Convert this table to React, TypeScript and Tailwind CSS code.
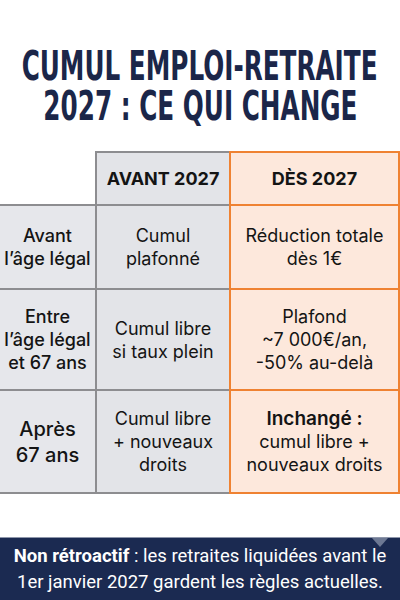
import React from "react";

const body = { fontFamily: "Inter, Roboto, 'Liberation Sans', sans-serif" };

function Cell({ className, children }: { className: string; children?: React.ReactNode }) {
  return (
    <div className={`flex items-center justify-center text-center text-[18px] leading-[23px] text-[#141414] ${className}`}>
      {children}
    </div>
  );
}

export default function App() {
  const g = "border-[#8d8d90]";
  const o = "border-[#ef8232]";
  return (
    <div className="w-[400px] h-[600px] bg-white flex flex-col overflow-hidden" style={body}>
      <div
        className="pt-[46px] flex flex-col items-center text-[#1b2649] font-bold text-[41px] leading-[40px] whitespace-nowrap"
        style={{ fontFamily: "'Liberation Sans Narrow', 'DejaVu Sans Condensed', sans-serif" }}
      >
        <div className="scale-x-[0.67]">CUMUL EMPLOI-RETRAITE</div>
        <div className="scale-x-[0.67]">2027 : CE QUI CHANGE</div>
      </div>

      <div className="mt-[25px] grid grid-cols-[97px_132px_171px] grid-rows-[55px_84px_101px_103px]">
        <div className={`bg-white border-r-2 border-b-2 ${g}`} />
        <Cell className={`bg-[#e3e4e8] border-t-2 border-b-2 ${g} font-bold text-[17px]`}>AVANT 2027</Cell>
        <Cell className={`bg-[#fde8dc] border-2 ${o} font-bold text-[17px]`}>DÈS 2027</Cell>

        <Cell className={`bg-[#e6e7eb] border-r-2 border-b-2 ${g} font-medium leading-[22px]`}>Avant<br />l’âge légal</Cell>
        <Cell className={`bg-[#e3e4e8] border-b-2 ${g}`}>Cumul<br />plafonné</Cell>
        <Cell className={`bg-[#fde8dc] border-l-2 border-r-2 border-b-2 ${o}`}>Réduction totale<br />dès 1€</Cell>

        <Cell className={`bg-[#e6e7eb] border-r-2 border-b-2 ${g} font-medium`}>Entre<br />l’âge légal<br />et 67 ans</Cell>
        <Cell className={`bg-[#e3e4e8] border-b-2 ${g}`}>Cumul libre<br />si taux plein</Cell>
        <Cell className={`bg-[#fde8dc] border-l-2 border-r-2 border-b-2 ${o}`}>Plafond<br />~7 000€/an,<br />-50% au-delà</Cell>

        <Cell className={`bg-[#e6e7eb] border-r-2 border-b-2 ${g} font-medium text-[20px] leading-[26px]`}>Après<br />67 ans</Cell>
        <Cell className={`bg-[#e3e4e8] border-b-2 ${g}`}>Cumul libre<br />+ nouveaux<br />droits</Cell>
        <Cell className={`bg-[#fde8dc] border-l-2 border-r-2 border-b-2 ${o}`}>
          <span><span className="text-[19px] font-semibold">Inchangé :</span><br />cumul libre +<br />nouveaux droits</span>
        </Cell>
      </div>

      <div
        className="relative mt-auto h-[63px] bg-[#1b2a51] border-t border-[#8e96aa] flex flex-col items-center justify-center text-white text-[18.5px] leading-[26px] whitespace-nowrap"
        style={{ fontFamily: "Roboto, 'Liberation Sans', sans-serif" }}
      >
        <div className="absolute top-0 left-[372px] w-0 h-0 border-l-[8px] border-r-[8px] border-t-[9px] border-l-transparent border-r-transparent border-t-[#6d7893]" />
        <div><span className="font-bold">Non rétroactif</span> : les retraites liquidées avant le</div>
        <div>1er janvier 2027 gardent les règles actuelles.</div>
      </div>
    </div>
  );
}
